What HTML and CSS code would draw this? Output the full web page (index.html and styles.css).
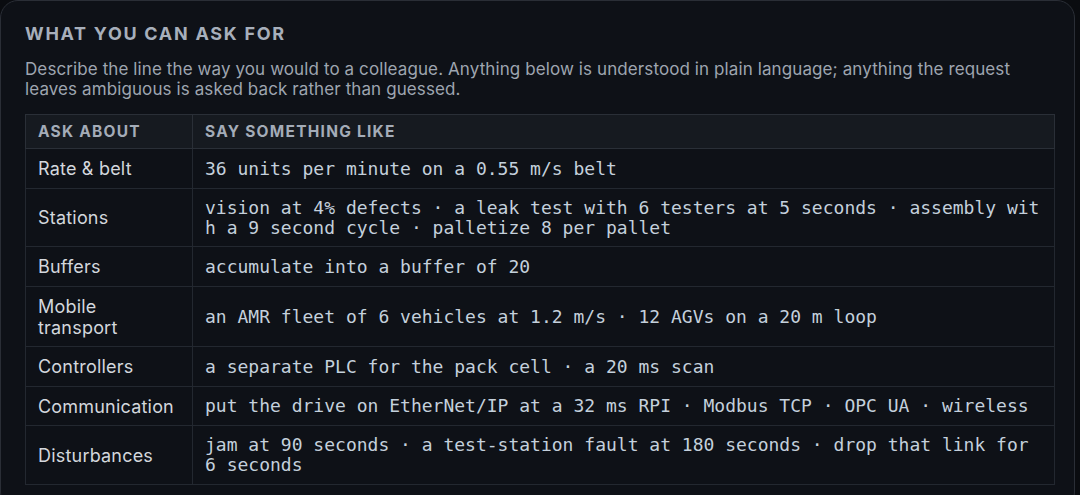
FILE: index.html
```html
<!DOCTYPE html>
<html lang="en">
<head>
<meta charset="utf-8">
<title>What you can ask for</title>
<link rel="stylesheet" href="styles.css">
</head>
<body>
<section class="card">
  <h2 class="card-title">What you can ask for</h2>
  <p class="card-intro">Describe the line the way you would to a colleague. Anything below is understood in plain language; anything the request leaves ambiguous is asked back rather than guessed.</p>
  <table class="asks">
    <colgroup><col class="col-topic"><col class="col-example"></colgroup>
    <thead>
      <tr><th>Ask about</th><th>Say something like</th></tr>
    </thead>
    <tbody>
      <tr><td class="topic">Rate &amp; belt</td><td class="example">36 units per minute on a 0.55 m/s belt</td></tr>
      <tr><td class="topic">Stations</td><td class="example">vision at 4% defects · a leak test with 6 testers at 5 seconds · assembly with a 9 second cycle · palletize 8 per pallet</td></tr>
      <tr><td class="topic">Buffers</td><td class="example">accumulate into a buffer of 20</td></tr>
      <tr><td class="topic">Mobile transport</td><td class="example">an AMR fleet of 6 vehicles at 1.2 m/s · 12 AGVs on a 20 m loop</td></tr>
      <tr><td class="topic">Controllers</td><td class="example">a separate PLC for the pack cell · a 20 ms scan</td></tr>
      <tr><td class="topic">Communication</td><td class="example">put the drive on EtherNet/IP at a 32 ms RPI · Modbus TCP · OPC UA · wireless</td></tr>
      <tr><td class="topic">Disturbances</td><td class="example">jam at 90 seconds · a test-station fault at 180 seconds · drop that link for 6 seconds</td></tr>
    </tbody>
  </table>
</section>
</body>
</html>
```

FILE: styles.css
```css
html, body {
  margin: 0;
  padding: 0;
  background: #0a0c10;
  height: 495px;
  overflow: hidden;
}

.card {
  box-sizing: border-box;
  width: 1075px;
  margin: 0;
  padding: 22px 19px 24px 24px;
  background: #0e1117;
  border: 1px solid #2a2e36;
  border-radius: 18px;
  font-family: Inter, "Noto Sans", sans-serif;
}

.card-title {
  margin: 0;
  font-size: 18px;
  line-height: 22px;
  font-weight: 700;
  letter-spacing: 0.095em;
  text-transform: uppercase;
  color: #a7afbb;
}

.card-intro {
  margin: 14px 0 15px;
  font-size: 17px;
  line-height: 20px;
  letter-spacing: 0.1px;
  color: #9ea5b0;
}

.asks {
  width: 100%;
  table-layout: fixed;
  border-collapse: collapse;
  border: 1px solid #262b33;
}

.col-topic { width: 167px; }

.asks th {
  padding: 8px 12px 8px;
  background: #161a20;
  border: 1px solid #2a2f37;
  text-align: left;
  font-size: 15.5px;
  line-height: 17px;
  font-weight: 700;
  letter-spacing: 0.08em;
  text-transform: uppercase;
  color: #a4acb8;
}

.asks td {
  padding: 9px 12px 8.5px;
  border: 1px solid #232830;
  vertical-align: middle;
}

.topic {
  font-size: 18px;
  line-height: 21px;
  letter-spacing: 0.2px;
  color: #d3d7dd;
}

.example {
  font-family: "DejaVu Sans Mono", "Liberation Mono", monospace;
  font-size: 18px;
  line-height: 20px;
  color: #c4d0dc;
  word-break: break-all;
}
```
